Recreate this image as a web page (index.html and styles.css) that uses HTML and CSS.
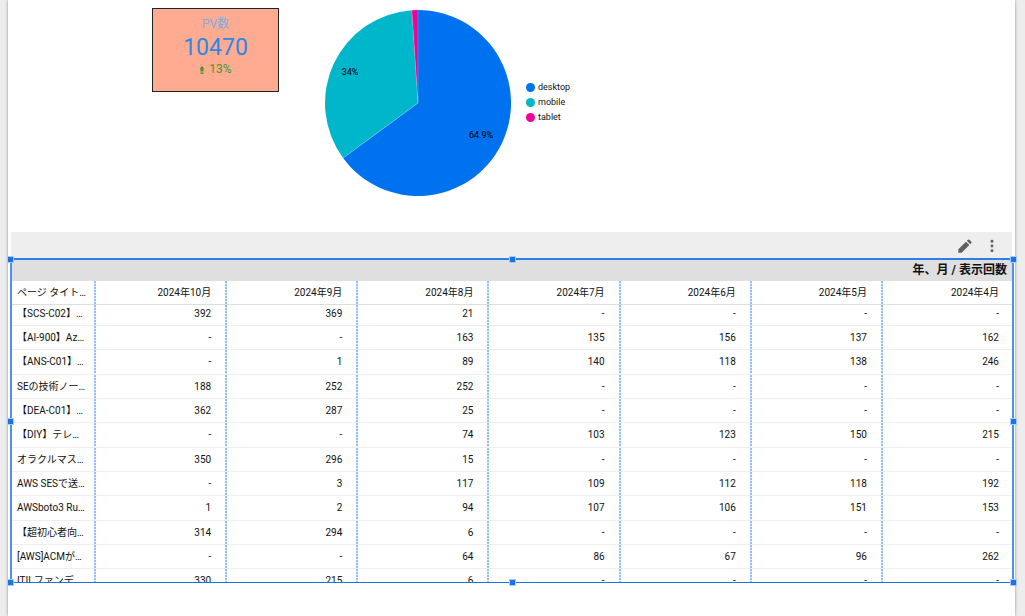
FILE: index.html
```html
<!DOCTYPE html>
<html lang="ja">
<head>
<meta charset="utf-8">
<title>PV数レポート</title>
<link rel="stylesheet" href="styles.css">
</head>
<body>
<main class="page">
  <section class="summary">
    <div class="scorecard">
      <div class="scorecard-label">PV数</div>
      <div class="scorecard-value">10470</div>
      <div class="scorecard-change">
        <svg class="arrow" viewBox="0 0 6 8" aria-hidden="true"><path d="M3 0 5.5 3H4.5V5h-3V3H.5zM1.5 5.5h3v1h-3zM1.5 7h3v1h-3z"/></svg>
        <span>13%</span>
      </div>
    </div>
    <svg class="pie" viewBox="-94 -94 188 188" role="img" aria-label="デバイス別の割合">
      <path fill="#0072f0" d="M0 0V-93A93 93 0 1 1 -74.9 55.1Z"/>
      <path fill="#00b6cb" d="M0 0-74.9 55.1A93 93 0 0 1 -6.2 -92.8Z"/>
      <path fill="#f10096" d="M0 0-6.2 -92.8A93 93 0 0 1 0 -93Z"/>
      <path class="slice-line" d="M0 -93V0L-74.9 55.1M0 0-6.2 -92.8"/>
      <text x="-68" y="-28" text-anchor="middle">34%</text>
      <text x="63" y="35" text-anchor="middle">64.9%</text>
    </svg>
    <ul class="legend">
      <li><span class="dot desktop"></span>desktop</li>
      <li><span class="dot mobile"></span>mobile</li>
      <li><span class="dot tablet"></span>tablet</li>
    </ul>
  </section>

  <section class="widget">
    <div class="toolbar">
      <button type="button" aria-label="編集"><svg viewBox="0 0 24 24"><path d="M2 17v5h5L18.5 10.5l-5-5zM21.4 7.6a1.6 1.6 0 0 0 0-2.2l-2.8-2.8a1.6 1.6 0 0 0-2.2 0L14.8 4.200l5 5z"/></svg></button>
      <button type="button" aria-label="その他"><svg viewBox="0 0 24 24"><circle cx="12" cy="5" r="2.2"/><circle cx="12" cy="12" r="2.2"/><circle cx="12" cy="19" r="2.2"/></svg></button>
    </div>
    <div class="selection">
      <div class="clip">
        <table class="pivot">
          <colgroup><col class="title-col"><col span="6"><col class="last-col"></colgroup>
          <thead>
            <tr class="group"><th colspan="8">年、月 / 表示回数</th></tr>
            <tr class="months"><th>ページ タイト…</th><th>2024年10月</th><th>2024年9月</th><th>2024年8月</th><th>2024年7月</th><th>2024年6月</th><th>2024年5月</th><th>2024年4月</th></tr>
          </thead>
          <tbody>
            <tr><th>【SCS-C02】…</th><td>392</td><td>369</td><td>21</td><td>-</td><td>-</td><td>-</td><td>-</td></tr>
            <tr><th>【AI-900】Az…</th><td>-</td><td>-</td><td>163</td><td>135</td><td>156</td><td>137</td><td>162</td></tr>
            <tr><th>【ANS-C01】…</th><td>-</td><td>1</td><td>89</td><td>140</td><td>118</td><td>138</td><td>246</td></tr>
            <tr><th>SEの技術ノー…</th><td>188</td><td>252</td><td>252</td><td>-</td><td>-</td><td>-</td><td>-</td></tr>
            <tr><th>【DEA-C01】…</th><td>362</td><td>287</td><td>25</td><td>-</td><td>-</td><td>-</td><td>-</td></tr>
            <tr><th>【DIY】テレ…</th><td>-</td><td>-</td><td>74</td><td>103</td><td>123</td><td>150</td><td>215</td></tr>
            <tr><th>オラクルマス…</th><td>350</td><td>296</td><td>15</td><td>-</td><td>-</td><td>-</td><td>-</td></tr>
            <tr><th>AWS SESで送…</th><td>-</td><td>3</td><td>117</td><td>109</td><td>112</td><td>118</td><td>192</td></tr>
            <tr><th>AWSboto3 Ru…</th><td>1</td><td>2</td><td>94</td><td>107</td><td>106</td><td>151</td><td>153</td></tr>
            <tr><th>【超初心者向…</th><td>314</td><td>294</td><td>6</td><td>-</td><td>-</td><td>-</td><td>-</td></tr>
            <tr><th>[AWS]ACMが…</th><td>-</td><td>-</td><td>64</td><td>86</td><td>67</td><td>96</td><td>262</td></tr>
            <tr><th>ITILファンデ…</th><td>330</td><td>215</td><td>6</td><td>-</td><td>-</td><td>-</td><td>-</td></tr>
          </tbody>
        </table>
      </div>
      <span class="handle top left"></span>
      <span class="handle top center"></span>
      <span class="handle top right"></span>
      <span class="handle middle left"></span>
      <span class="handle middle right"></span>
      <span class="handle bottom left"></span>
      <span class="handle bottom center"></span>
      <span class="handle bottom right"></span>
    </div>
  </section>
</main>
</body>
</html>
```
FILE: styles.css
```css
* {
  box-sizing: border-box;
}

body {
  margin: 0;
  padding: 0 10px 0 8px;
  background: #ededed;
  font-family: Roboto, "Noto Sans CJK JP", sans-serif;
  color: #111;
}

.page {
  min-height: 100vh;
  background: #fff;
  box-shadow: 0 0 3px rgba(0, 0, 0, 0.4);
}

.summary {
  display: flex;
  align-items: flex-start;
  height: 232px;
  padding: 8px 0 0 144px;
}

.scorecard {
  width: 127px;
  height: 84px;
  padding-top: 6px;
  border: 1px solid #222;
  background: #ffab91;
  text-align: center;
}

.scorecard-label {
  font-size: 12px;
  line-height: 18px;
  color: #79afe2;
}

.scorecard-value {
  font-size: 23px;
  line-height: 29px;
  color: #2b89e4;
}

.scorecard-change {
  display: flex;
  align-items: center;
  justify-content: center;
  gap: 4px;
  font-size: 12px;
  line-height: 14px;
  color: #43982f;
}

.arrow {
  width: 6px;
  height: 8px;
  margin-top: 2px;
  fill: currentColor;
}

.pie {
  width: 188px;
  height: 188px;
  margin: 1px 0 0 45px;
  font-size: 9px;
}

.slice-line {
  fill: none;
  stroke: #fff;
  stroke-opacity: 0.4;
  stroke-width: 0.5;
}

.legend {
  margin: 72px 0 0 14px;
  padding: 0;
  list-style: none;
  font-size: 9px;
  line-height: 15px;
}

.legend li {
  display: flex;
  align-items: center;
  gap: 3px;
}

.dot {
  width: 9px;
  height: 9px;
  border-radius: 50%;
}

.desktop {
  background: #0072f0;
}

.mobile {
  background: #00b6cb;
}

.tablet {
  background: #f10096;
}

.widget {
  margin: 0 1px 0 2px;
}

.toolbar {
  display: flex;
  justify-content: flex-end;
  align-items: center;
  gap: 11px;
  height: 26px;
  margin: 0 2px 0 1px;
  padding: 2px 12px 0 0;
  background: #eee;
}

.toolbar button {
  width: 16px;
  height: 16px;
  padding: 0;
  border: 0;
  background: none;
}

.toolbar svg {
  display: block;
  width: 16px;
  height: 16px;
  fill: #616161;
}

.selection {
  position: relative;
  border: 2px solid #4a90f5;
  border-top: 2px solid #2c7eea;
  border-bottom: 1px solid #1a73e8;
}

.clip {
  height: 322px;
  overflow: hidden;
}

.pivot {
  width: 100%;
  table-layout: fixed;
  border-collapse: separate;
  border-spacing: 0;
  font-size: 10px;
  line-height: 14px;
}

.title-col {
  width: 84px;
}

.last-col {
  width: 129px;
}

.pivot th,
.pivot td {
  height: 24px;
  padding: 0 16px 0 0;
  border-bottom: 1px solid #eee;
  font-weight: 400;
  text-align: right;
  white-space: nowrap;
}

.pivot td:last-child,
.pivot .months th:last-child {
  padding-right: 13px;
}

.pivot tr:not(.group) > :not(:last-child) {
  background: repeating-linear-gradient(#93c0fb 0 2px, #e4f0ff 2px 3px) right top / 2px 100% no-repeat;
}

.pivot tr > :first-child {
  padding: 0 0 0 5px;
  text-align: left;
}

.pivot .group th {
  height: 21px;
  padding: 0 5px 2px 0;
  border: 0;
  background: #dfdfdf;
  font-size: 12px;
  font-weight: 700;
  text-align: right;
}

.pivot .months th {
  border-color: #ddd;
}

.pivot tbody tr:first-child > * {
  height: 21px;
  padding-bottom: 2px;
}

.pivot tbody tr:nth-child(3n) > * {
  height: 25px;
}

.handle {
  position: absolute;
  width: 7px;
  height: 7px;
  border: 1px solid #a9cbfa;
  background: #1a73e8;
}

.top {
  top: -4px;
}

.middle {
  top: calc(50% - 3px);
}

.bottom {
  bottom: -4px;
}

.left {
  left: -5px;
}

.center {
  left: calc(50% - 3px);
}

.right {
  right: -5px;
}
```
